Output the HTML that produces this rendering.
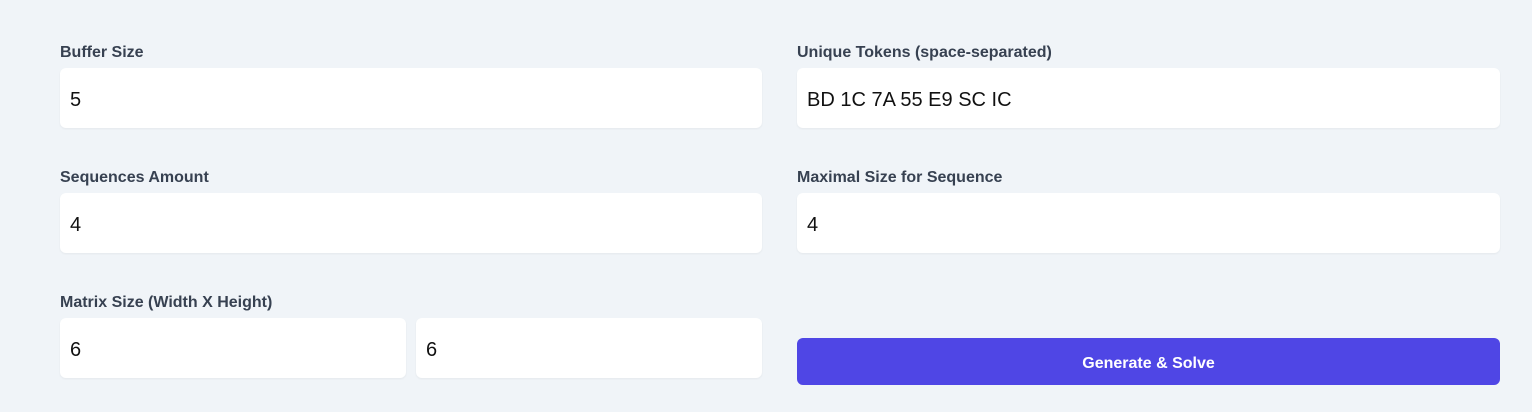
<!DOCTYPE html>
<html><head><style>
body{margin:0;width:1532px;height:412px;background:#f0f4f8;font-family:"Liberation Sans",sans-serif;position:relative;overflow:hidden}
.l{position:absolute;font-size:16px;color:#374151;font-weight:600;line-height:20px}
.i{position:absolute;background:#fff;border-radius:6px;height:60px;box-shadow:0 1px 2px rgba(0,0,0,.05);font-size:20px;color:#111;line-height:64px;padding-left:10px;box-sizing:border-box}
.b{position:absolute;left:797px;top:338px;width:703px;height:47px;background:#4f46e5;border-radius:6px;color:#fff;font-weight:bold;font-size:16px;line-height:51px;text-align:center}
</style></head><body>
<div class="l" style="left:60px;top:43px">Buffer Size</div>
<div class="i" style="left:60px;top:68px;width:702px">5</div>
<div class="l" style="left:797px;top:43px">Unique Tokens (space-separated)</div>
<div class="i" style="left:797px;top:68px;width:703px">BD 1C 7A 55 E9 SC IC</div>
<div class="l" style="left:60px;top:168px">Sequences Amount</div>
<div class="i" style="left:60px;top:193px;width:702px">4</div>
<div class="l" style="left:797px;top:168px">Maximal Size for Sequence</div>
<div class="i" style="left:797px;top:193px;width:703px">4</div>
<div class="l" style="left:60px;top:293px">Matrix Size (Width X Height)</div>
<div class="i" style="left:60px;top:318px;width:346px">6</div>
<div class="i" style="left:416px;top:318px;width:346px">6</div>
<div class="b">Generate &amp; Solve</div>
</body></html>
